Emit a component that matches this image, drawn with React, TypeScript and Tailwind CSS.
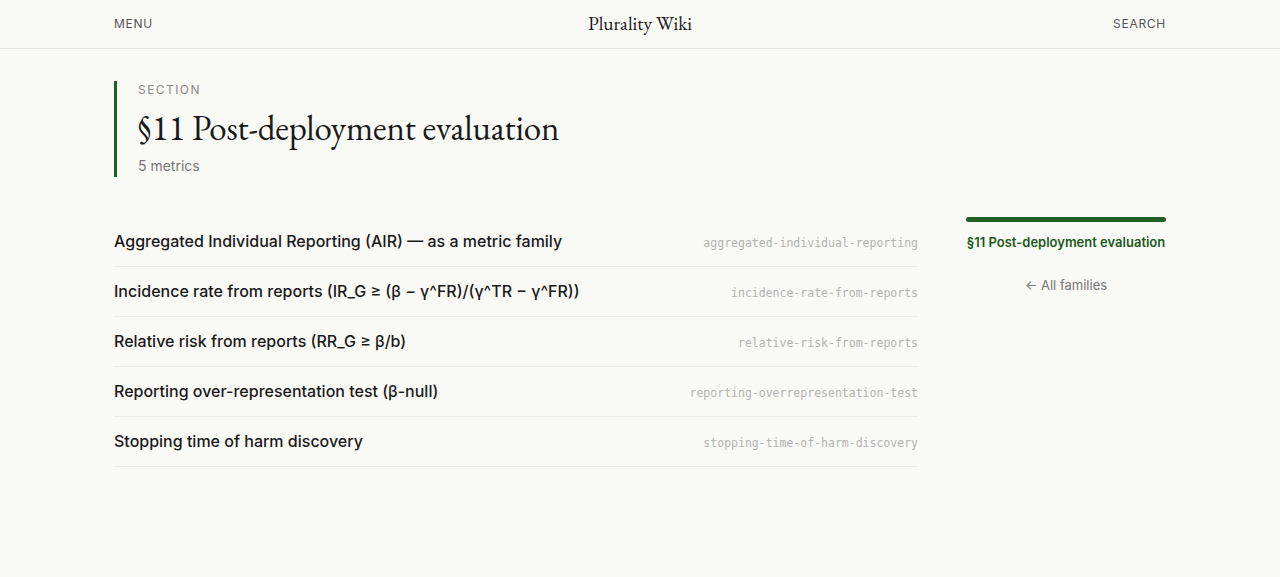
import React from "react";

const metrics = [
  { title: "Aggregated Individual Reporting (AIR) — as a metric family", slug: "aggregated-individual-reporting" },
  { title: "Incidence rate from reports (IR_G ≥ (β − γ^FR)/(γ^TR − γ^FR))", slug: "incidence-rate-from-reports" },
  { title: "Relative risk from reports (RR_G ≥ β/b)", slug: "relative-risk-from-reports" },
  { title: "Reporting over-representation test (β-null)", slug: "reporting-overrepresentation-test" },
  { title: "Stopping time of harm discovery", slug: "stopping-time-of-harm-discovery" },
];

const sans = "font-['Inter','Noto_Sans',sans-serif]";
const serif = "font-['EB_Garamond','Liberation_Serif',serif]";
const mono = "font-['DejaVu_Sans_Mono','Liberation_Mono',monospace]";

export default function App() {
  return (
    <div className={`min-h-[577px] bg-[#f9f9f6] text-[#1a1a1a] ${sans}`}>
      <header className="border-b border-[#e3e3df]">
        <div className="mx-auto grid h-[48px] w-[1052px] grid-cols-3 items-center">
          <span className="text-[12px] tracking-[0.06em] text-[#555]">MENU</span>
          <span className={`${serif} text-center text-[19.5px] text-[#1a1a1a]`}>Plurality Wiki</span>
          <span className="text-right text-[12px] tracking-[0.06em] text-[#555]">SEARCH</span>
        </div>
      </header>

      <main className="mx-auto w-[1052px] pt-[32px]">
        <section className="border-l-[3px] border-[#1f5f24] pl-[21px] pt-[1px] pb-[1px]">
          <div className="text-[12px] leading-[16px] tracking-[0.12em] text-[#8a8a86]">SECTION</div>
          <h1 className={`${serif} mt-[8px] text-[35px] leading-[44px] tracking-[-0.005em] text-[#1a1a1a]`}>
            §11 Post-deployment evaluation
          </h1>
          <div className="mt-[6px] text-[14px] leading-[20px] text-[#777]">5 metrics</div>
        </section>

        <div className="mt-[40px] flex gap-[48px]">
          <ul className="w-[804px]">
            {metrics.map((m) => (
              <li
                key={m.slug}
                className="flex items-baseline justify-between border-b border-[#ebebe7] py-[12px]"
              >
                <span className="text-[16px] font-medium leading-[25px] text-[#1a1a1a]">{m.title}</span>
                <span className={`${mono} text-[11.5px] text-[#b3b3b0]`}>{m.slug}</span>
              </li>
            ))}
          </ul>

          <aside className="w-[200px]">
            <div className="h-[5px] rounded-full bg-[#1f5f24]" />
            <div className="mt-[11px] text-center text-[13px] font-semibold leading-[18px] text-[#1c5a20]">
              §11 Post-deployment evaluation
            </div>
            <div className="mt-[25px] text-center text-[13px] leading-[18px] text-[#777]">← All families</div>
          </aside>
        </div>
      </main>
    </div>
  );
}
